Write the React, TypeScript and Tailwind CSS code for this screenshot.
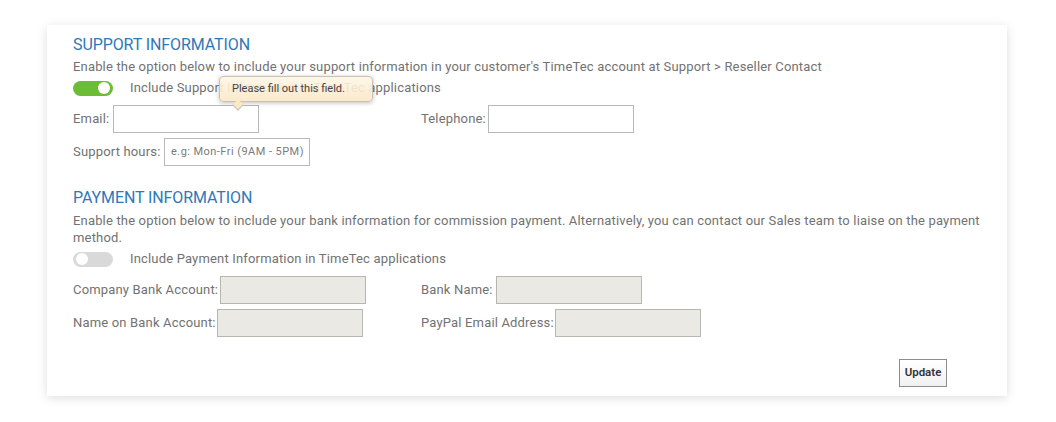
import React from "react";

function Toggle({ on }: { on: boolean }) {
  return (
    <div
      className={
        "relative h-[15px] w-[40px] shrink-0 rounded-full " +
        (on ? "bg-[#6cbd35]" : "bg-[#d9d9d9]")
      }
    >
      <div
        className={
          "absolute top-[1.5px] h-[12px] w-[12px] rounded-full bg-white " +
          (on ? "right-[3px]" : "left-[3px]")
        }
      />
    </div>
  );
}

function Field({
  label,
  labelW,
  disabled,
  placeholder,
}: {
  label: string;
  labelW: string;
  disabled?: boolean;
  placeholder?: string;
}) {
  return (
    <div className="flex items-center">
      <span className={"whitespace-nowrap text-[13px] text-[#727272] " + labelW}>{label}</span>
      <div
        className={
          "flex h-[28px] w-[146px] items-center border px-[6px] " +
          (disabled ? "border-[#b7b7b2] bg-[#eae9e3]" : "border-[#b9b9b9] bg-white")
        }
      >
        {placeholder && (
          <span className="whitespace-nowrap text-[11px] tracking-[0.45px] text-[#7b7b7b]">{placeholder}</span>
        )}
      </div>
    </div>
  );
}

export default function App() {
  return (
    <div
      className="h-[422px] w-[1056px] bg-white pl-[47px] pt-[25px] tracking-[0.17px]"
      style={{ fontFamily: "Roboto, 'Liberation Sans', sans-serif" }}
    >
      <div className="h-[371px] w-[960px] bg-white px-[26px] pt-[10px] shadow-[0_2px_10px_rgba(0,0,0,0.13)]">
        {/* SUPPORT */}
        <h2 className="h-[20px] text-[16px] leading-[20px] tracking-[-0.1px] text-[#2f78b6]">
          SUPPORT INFORMATION
        </h2>
        <p className="mt-[3px] text-[13px] leading-[17px] text-[#727272]">
          Enable the option below to include your support information in your customer's TimeTec account at Support &gt; Reseller Contact
        </p>
        <div className="relative mt-[3px] flex h-[20px] items-center">
          <Toggle on />
          <span className="ml-[17px] text-[13px] text-[#727272]">
            Include Support Information in TimeTec applications
          </span>
          {/* tooltip */}
          <div className="absolute left-[146px] top-[-2px] flex h-[26px] w-[154px] items-center rounded-[4px] border border-[#c9c2b4] bg-[linear-gradient(#fdf5e6e6,#fbe8c6e6)] pl-[12px] shadow-[0_1px_4px_rgba(0,0,0,0.25)]">
            <span className="whitespace-nowrap text-[11px] tracking-[0px] text-[#444]">Please fill out this field.</span>
            <div className="absolute left-[14px] top-[24px] h-[8px] w-[8px] rotate-45 border-b border-r border-[#c9c2b4] bg-[#fbe8c6]" />
          </div>
        </div>
        <div className="mt-[7px] grid grid-cols-[348px_1fr]">
          <Field label="Email:" labelW="w-[40px]" />
          <Field label="Telephone:" labelW="w-[67px]" />
        </div>
        <div className="mt-[5px]">
          <Field label="Support hours:" labelW="w-[91px]" placeholder="e.g: Mon-Fri (9AM - 5PM)" />
        </div>

        {/* PAYMENT */}
        <h2 className="mt-[22px] h-[20px] text-[16px] leading-[20px] tracking-[-0.1px] text-[#2f78b6]">
          PAYMENT INFORMATION
        </h2>
        <p className="mt-[4px] text-[13px] leading-[17px] text-[#727272]">
          Enable the option below to include your bank information for commission payment. Alternatively, you can contact our Sales team to liaise on the payment method.
        </p>
        <div className="mt-[3px] flex h-[20px] items-center">
          <Toggle on={false} />
          <span className="ml-[17px] text-[13px] text-[#727272]">
            Include Payment Information in TimeTec applications
          </span>
        </div>
        <div className="mt-[7px] grid grid-cols-[348px_1fr]">
          <Field label="Company Bank Account:" labelW="w-[147px]" disabled />
          <Field label="Bank Name:" labelW="w-[75px]" disabled />
        </div>
        <div className="mt-[5px] grid grid-cols-[348px_1fr]">
          <Field label="Name on Bank Account:" labelW="w-[144px]" disabled />
          <Field label="PayPal Email Address:" labelW="w-[134px]" disabled />
        </div>

        <div className="mt-[22px] flex justify-end pr-[34px]">
          <button className="flex h-[28px] w-[48px] items-center justify-center border border-[#8c8c8c] bg-[linear-gradient(#ffffff,#f1f1f1)] text-[11.5px] font-semibold tracking-[0px] text-[#333]">
            Update
          </button>
        </div>
      </div>
    </div>
  );
}
